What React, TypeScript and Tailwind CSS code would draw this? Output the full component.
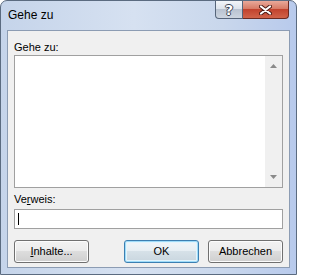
import React from "react";

const font = { fontFamily: '"Liberation Sans", Arial, sans-serif' };

function DialogButton({
  children,
  isDefault = false,
}: {
  children: React.ReactNode;
  isDefault?: boolean;
}) {
  return (
    <button
      className={
        isDefault
          ? "h-[23px] w-[75px] rounded-[3px] border border-[#3c7fb1] bg-[linear-gradient(#f1f6f9_0%,#e6eef3_50%,#d6e1e8_50%,#c9d6df_100%)] text-[11px] text-black shadow-[inset_0_0_0_1px_#9fdcf9,inset_0_0_0_2px_#e3f4fc]"
          : "h-[23px] w-[75px] rounded-[3px] border border-[#707070] bg-[linear-gradient(#f2f2f2_0%,#ebebeb_50%,#dddddd_50%,#cfcfcf_100%)] text-[11px] text-black shadow-[inset_0_0_0_1px_#fcfcfc]"
      }
    >
      {children}
    </button>
  );
}

export default function App() {
  return (
    <div
      style={font}
      className="flex h-[275px] w-[297px] flex-col rounded-t-[7px] border border-[#5b6b80] bg-[linear-gradient(90deg,#c5d4ea_0%,#d6e1f1_45%,#c9d7ec_75%,#b8caec_100%)] text-black"
    >
      {/* title bar */}
      <div className="flex h-[29px] shrink-0 items-start">
        <div className="pl-[7px] pt-[7px] text-[12px] leading-[15px] text-black">Gehe zu</div>
        <div className="ml-auto mr-[7px] flex">
          <div className="flex h-[18px] w-[28px] items-center justify-center rounded-bl-[4px] border border-t-0 border-[#56657a] bg-[linear-gradient(#f2f5f9_0%,#dde3ec_45%,#b9c3d1_50%,#cdd5e0_100%)]">
            <span
              className="text-[14px] font-bold leading-none text-white"
              style={{
                fontFamily: '"DejaVu Sans", sans-serif',
                textShadow:
                  "1px 0 0 #3a4454, -1px 0 0 #3a4454, 0 1px 0 #3a4454, 0 -1px 0 #3a4454",
              }}
            >
              ?
            </span>
          </div>
          <div className="flex h-[18px] w-[46px] items-center justify-center rounded-br-[4px] border border-l-0 border-t-0 border-[#6b2a22] bg-[linear-gradient(#e9a99a_0%,#d77b66_45%,#c2432e_50%,#d0634a_100%)]">
            <svg width="13" height="10" viewBox="0 0 13 10">
              <path
                d="M2 1.5 L11 8.5 M11 1.5 L2 8.5"
                stroke="#4b1a14"
                strokeWidth="4"
                strokeLinecap="round"
              />
              <path
                d="M2 1.5 L11 8.5 M11 1.5 L2 8.5"
                stroke="#ffffff"
                strokeWidth="2.2"
                strokeLinecap="round"
              />
            </svg>
          </div>
        </div>
      </div>

      {/* client area */}
      <div className="mx-[6px] mb-[6px] flex flex-1 flex-col border border-[#8c9cb3] bg-[#f0f0f0] px-[6px] pt-[9px] text-[11px]">
        <div className="leading-[14px]">Gehe zu:</div>
        <div className="mt-[1px] flex h-[133px] border border-[#a0a0a0] bg-white">
          <div className="flex-1" />
          <div className="flex w-[17px] flex-col items-center justify-between bg-[#f0f0f0] py-[8px]">
            <svg width="7" height="4" viewBox="0 0 7 4">
              <path d="M0 4 L3.5 0 L7 4 Z" fill="#8a8a8a" />
            </svg>
            <svg width="7" height="4" viewBox="0 0 7 4">
              <path d="M0 0 L3.5 4 L7 0 Z" fill="#8a8a8a" />
            </svg>
          </div>
        </div>

        <div className="mt-[4px] leading-[14px]">
          Ve<span className="underline">r</span>weis:
        </div>
        <div className="mt-[3px] flex h-[20px] items-center border border-[#a0a0a0] bg-white pl-[3px]">
          <div className="h-[12px] w-px bg-black" />
        </div>

        <div className="mt-[11px] flex">
          <DialogButton>
            <span className="underline">I</span>nhalte...
          </DialogButton>
          <div className="ml-auto flex gap-[9px]">
            <DialogButton isDefault>OK</DialogButton>
            <DialogButton>Abbrechen</DialogButton>
          </div>
        </div>
      </div>
    </div>
  );
}
